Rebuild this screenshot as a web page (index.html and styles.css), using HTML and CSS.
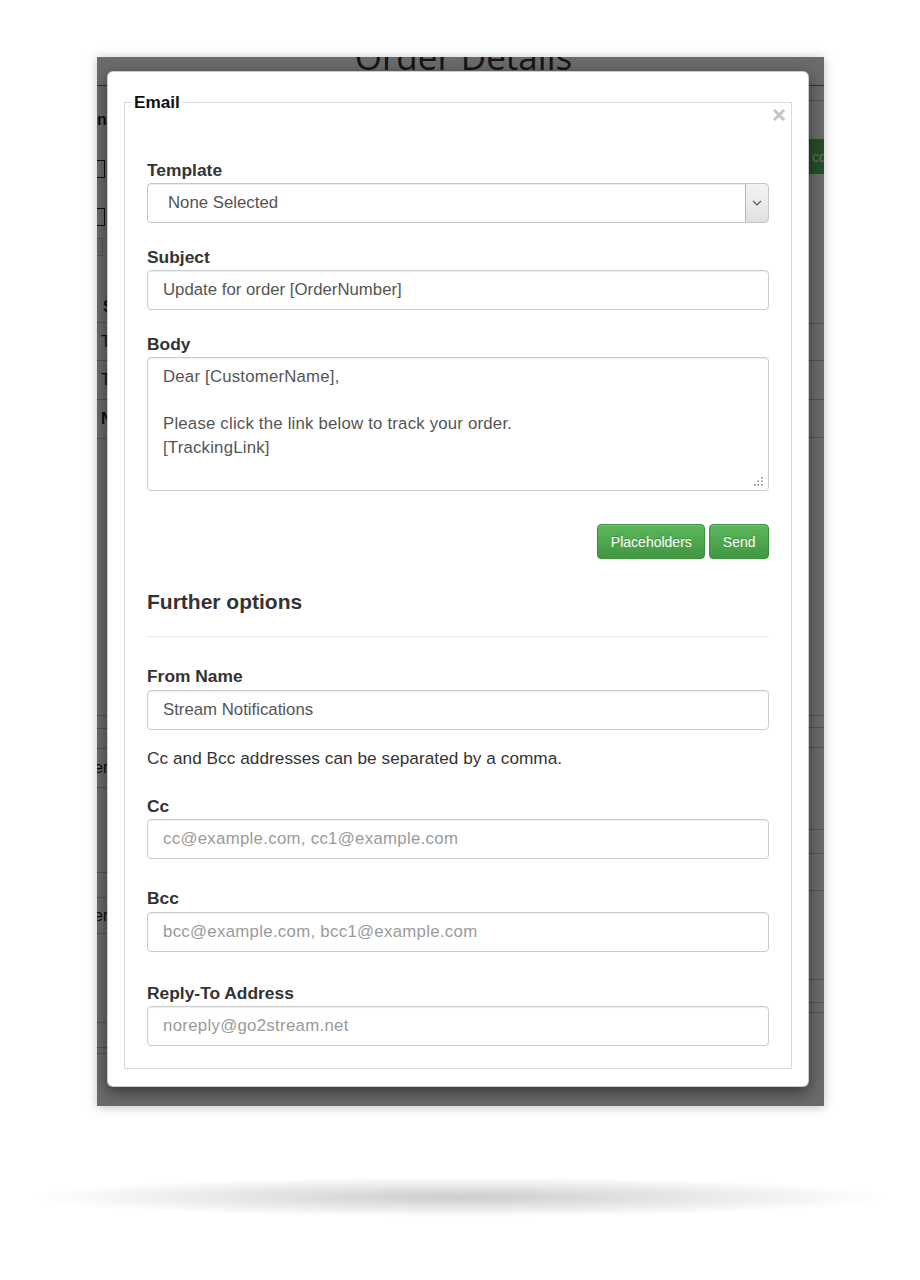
FILE: index.html
```html
<!DOCTYPE html>
<html lang="en">
<head>
<meta charset="utf-8">
<title>Email</title>
<link rel="stylesheet" href="styles.css">
</head>
<body>
<div class="stage">
  <div class="frame">
    <div class="page">
      <h1 class="page-title">Order Details</h1>
      <div class="page-body">
        <div class="side side-left">
          <div class="bg-name">n:</div>
          <div class="bg-check bg-check-a"></div>
          <div class="bg-check bg-check-b"></div>
          <div class="bg-input"></div>
          <div class="bg-letter">S</div>
          <div class="bg-table bg-table-top">
            <div class="bg-row r38">T</div>
            <div class="bg-row r39">T</div>
            <div class="bg-row r39 bg-strong">N</div>
          </div>
          <div class="bg-table bg-table-low">
            <div class="bg-row r13"></div>
            <div class="bg-row r20"></div>
            <div class="bg-row r39 bg-cut">er</div>
            <div class="bg-row r85"></div>
            <div class="bg-row r25"></div>
            <div class="bg-row r36 bg-cut">er</div>
            <div class="bg-row r89"></div>
            <div class="bg-row r25"></div>
            <div class="bg-row r6"></div>
          </div>
        </div>
        <div class="side side-right">
          <div class="bg-rule"></div>
          <div class="bg-btn">co</div>
          <div class="bg-table bg-table-top-r">
            <div class="bg-row r37"></div>
            <div class="bg-row r39"></div>
            <div class="bg-row r38"></div>
          </div>
          <div class="bg-table bg-table-low-r">
            <div class="bg-row r12"></div>
            <div class="bg-row r20"></div>
            <div class="bg-row r82"></div>
            <div class="bg-row r24"></div>
            <div class="bg-row r37"></div>
            <div class="bg-row r89"></div>
            <div class="bg-row r23"></div>
            <div class="bg-row r10"></div>
          </div>
        </div>
      </div>
    </div>

    <div class="backdrop"></div>

    <div class="modal">
      <fieldset class="email">
        <legend class="email-legend">Email</legend>
        <div class="close-row"><span class="close">×</span></div>
        <div class="email-body">
          <div class="group">
            <label class="field-label">Template</label>
            <div class="control select">
              <span class="select-text">None Selected</span>
              <span class="select-arrow">
                <svg width="10" height="6" viewBox="0 0 10 6"><polyline points="1,1 5,5 9,1" fill="none" stroke="#555" stroke-width="1.1"/></svg>
              </span>
            </div>
          </div>

          <div class="group g-subject">
            <label class="field-label">Subject</label>
            <div class="control">Update for order [OrderNumber]</div>
          </div>

          <div class="group g-body">
            <label class="field-label">Body</label>
            <div class="control textarea">Dear [CustomerName],<br><br>Please click the link below to track your order.<br>[TrackingLink]
              <svg class="grip" width="11" height="11" viewBox="0 0 11 11">
                <rect x="8" y="1" width="1.6" height="1.6" fill="#8c8c8c"/>
                <rect x="4.5" y="4.5" width="1.6" height="1.6" fill="#8c8c8c"/>
                <rect x="8" y="4.5" width="1.6" height="1.6" fill="#8c8c8c"/>
                <rect x="1" y="8" width="1.6" height="1.6" fill="#8c8c8c"/>
                <rect x="4.5" y="8" width="1.6" height="1.6" fill="#8c8c8c"/>
                <rect x="8" y="8" width="1.6" height="1.6" fill="#8c8c8c"/>
              </svg>
            </div>
          </div>

          <div class="actions">
            <span class="btn">Placeholders</span>
            <span class="btn">Send</span>
          </div>

          <h4 class="section-title">Further options</h4>
          <div class="divider"></div>

          <div class="group g-from">
            <label class="field-label">From Name</label>
            <div class="control">Stream Notifications</div>
          </div>

          <p class="help">Cc and Bcc addresses can be separated by a comma.</p>

          <div class="group g-cc">
            <label class="field-label">Cc</label>
            <div class="control placeholder">cc@example.com, cc1@example.com</div>
          </div>

          <div class="group g-bcc">
            <label class="field-label">Bcc</label>
            <div class="control placeholder">bcc@example.com, bcc1@example.com</div>
          </div>

          <div class="group g-reply">
            <label class="field-label">Reply-To Address</label>
            <div class="control placeholder">noreply@go2stream.net</div>
          </div>
        </div>
      </fieldset>
    </div>
  </div>
  <div class="floor-shadow"></div>
</div>
</body>
</html>
```
FILE: styles.css
```css
* { box-sizing: border-box; }

html, body {
  margin: 0;
  background: #ffffff;
}

body {
  font-family: "Liberation Sans", Arial, sans-serif;
}

.stage {
  padding-top: 57px;
}

.frame {
  position: relative;
  margin-left: 97px;
  width: 727px;
  height: 1049px;
  overflow: hidden;
  background: #ffffff;
  box-shadow: 0 1px 10px rgba(0, 0, 0, 0.25);
}

.floor-shadow {
  margin: 71px 0 0 30px;
  width: 860px;
  height: 40px;
  background: radial-gradient(closest-side, rgba(0, 0, 0, 0.2), rgba(0, 0, 0, 0));
}

/* ---------- page behind the dialog ---------- */
.page {
  color: #222;
  font-family: "Open Sans", "Liberation Sans", sans-serif;
}

.page-title {
  margin: -18px 0 0;
  padding: 0 0 11px 6px;
  font-size: 35px;
  font-weight: 400;
  line-height: 35px;
  text-align: center;
  color: #333;
  border-bottom: 1px solid #777;
}

.page-body {
  display: flex;
  justify-content: space-between;
}

.side-left {
  width: 40px;
}

.side-right {
  width: 30px;
  margin-right: -6px;
}

.bg-name {
  margin-top: 22px;
  font-family: "Liberation Sans", Arial, sans-serif;
  font-size: 16px;
  font-weight: bold;
  line-height: 24px;
}

.bg-check {
  width: 18px;
  height: 18px;
  margin-left: -10px;
  border: 1px solid #222;
  background: #fff;
}
.bg-check-a { margin-top: 28px; }
.bg-check-b { margin-top: 30px; }

.bg-input {
  margin-top: 12px;
  margin-left: -20px;
  width: 26px;
  height: 18px;
  border: 1px solid #ccc;
  background: #f2f2f2;
}

.bg-letter {
  margin-top: 42px;
  padding-left: 6px;
  font-family: "Liberation Sans", Arial, sans-serif;
  font-size: 16px;
  font-weight: bold;
  line-height: 18px;
}

.bg-table { border-bottom: 1px solid #c8c8c8; }
.bg-table-top { margin-top: 6px; }
.bg-table-low { margin-top: 276px; }
.bg-table-top-r { margin-top: 149px; }
.bg-table-low-r { margin-top: 277px; }

.bg-row {
  border-top: 1px solid #c8c8c8;
  padding-left: 4px;
  font-family: "Liberation Sans", Arial, sans-serif;
  font-size: 16px;
  display: flex;
  align-items: center;
}
.bg-strong { font-weight: bold; }
.bg-cut { padding-left: 0; margin-left: -3px; }

.r6 { height: 6px; }
.r10 { height: 10px; }
.r12 { height: 12px; }
.r13 { height: 13px; }
.r20 { height: 20px; }
.r23 { height: 23px; }
.r24 { height: 24px; }
.r25 { height: 25px; }
.r36 { height: 36px; }
.r37 { height: 37px; }
.r38 { height: 38px; }
.r39 { height: 39px; }
.r82 { height: 82px; }
.r85 { height: 85px; }
.r89 { height: 89px; }

.bg-rule {
  margin-top: 14px;
  border-top: 1px solid #c8c8c8;
}

.bg-btn {
  margin-top: 38px;
  height: 35px;
  padding-left: 12px;
  display: flex;
  align-items: center;
  background: #5cb85c;
  color: #fff;
  font-family: "Liberation Sans", Arial, sans-serif;
  font-size: 14px;
  border-radius: 4px 0 0 4px;
}

.backdrop {
  position: absolute;
  inset: 0;
  background: rgba(0, 0, 0, 0.58);
}

/* ---------- dialog ---------- */
.modal {
  position: absolute;
  left: 10px;
  top: 14px;
  width: 702px;
  padding: 20px 16px 17px;
  background: #fff;
  border: 1px solid rgba(0, 0, 0, 0.2);
  border-radius: 6px;
  box-shadow: 0 5px 15px rgba(0, 0, 0, 0.5);
  color: #333;
  font-family: "Liberation Sans", Arial, sans-serif;
}

.email {
  margin: 0;
  padding: 0;
  min-width: 0;
  border: 1px solid #d9d9d9;
}

.email-legend {
  margin-left: 7px;
  padding: 0 2px;
  font-size: 17.2px;
  font-weight: bold;
  line-height: 20px;
  color: #111;
}

.close-row {
  display: flex;
  justify-content: flex-end;
  margin-top: -9px;
  height: 57px;
  padding-right: 5px;
}

.close {
  font-size: 24px;
  font-weight: bold;
  line-height: 24px;
  color: #c4c4c4;
}

.email-body {
  padding: 0 22px 22px;
}

.field-label {
  display: block;
  margin-bottom: 2px;
  font-size: 17.4px;
  font-weight: bold;
  line-height: 21px;
  color: #333;
}

.g-subject, .g-body { margin-top: 24px; }
.g-from { margin-top: 29px; }
.g-from .field-label { margin-bottom: 3px; }
.g-cc { margin-top: 26px; }
.g-bcc { margin-top: 29px; }
.g-bcc .field-label { margin-bottom: 3px; }
.g-reply { margin-top: 31px; }

.control {
  display: flex;
  align-items: center;
  height: 40px;
  padding: 0 15px;
  border: 1px solid #cccccc;
  border-radius: 4px;
  background: #fff;
  box-shadow: inset 0 1px 1px rgba(0, 0, 0, 0.075);
  font-size: 16.8px;
  color: #555;
  white-space: nowrap;
}

.placeholder {
  color: #9a9a9a;
  letter-spacing: 0.3px;
}

.select {
  padding: 0 0 0 20px;
  overflow: hidden;
  border-color: #c6c6c6;
}

.select-text { flex: 1; }

.select-arrow {
  align-self: stretch;
  width: 24px;
  margin: -1px -1px -1px 0;
  display: flex;
  align-items: center;
  justify-content: center;
  border: 1px solid #b3b3b3;
  border-radius: 0 4px 4px 0;
  background: linear-gradient(#f3f3f3, #e1e1e1);
}

.textarea {
  position: relative;
  display: block;
  height: 134px;
  padding: 7px 15px;
  line-height: 23.5px;
  letter-spacing: 0.2px;
  white-space: normal;
}

.grip {
  position: absolute;
  right: 4px;
  bottom: 3px;
}

.actions {
  display: flex;
  justify-content: flex-end;
  gap: 4px;
  margin-top: 33px;
}

.btn {
  display: flex;
  align-items: center;
  height: 35px;
  padding: 0 12.5px;
  font-size: 14px;
  color: #fff;
  border: 1px solid #3e8f3e;
  border-radius: 4px;
  background: linear-gradient(#5cb85c, #419641);
  text-shadow: 0 -1px 0 rgba(0, 0, 0, 0.2);
  box-shadow: inset 0 1px 0 rgba(255, 255, 255, 0.15), 0 1px 1px rgba(0, 0, 0, 0.075);
}

.section-title {
  margin: 30px 0 0;
  font-size: 21px;
  font-weight: bold;
  line-height: 25px;
  color: #333;
}

.divider {
  margin-top: 22px;
  border-top: 1px solid #eeeeee;
}

.help {
  margin: 16px 0 0;
  font-size: 17.2px;
  line-height: 24px;
  letter-spacing: 0.05px;
  color: #333;
}
```
